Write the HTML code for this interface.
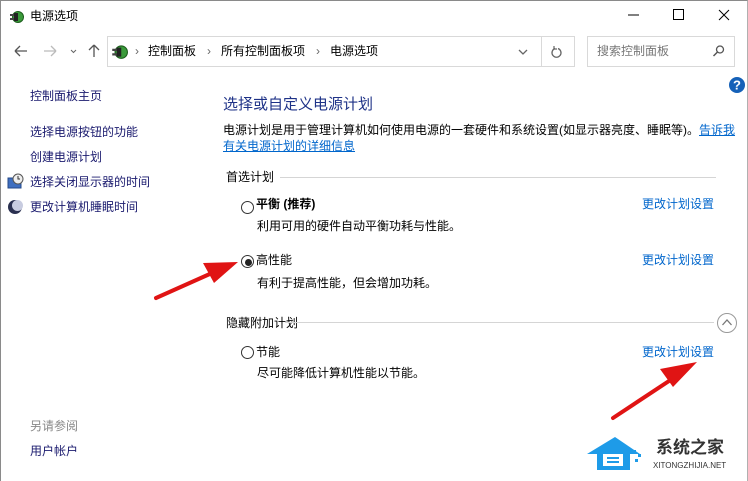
<!DOCTYPE html>
<html><head><meta charset="utf-8"><style>
*{margin:0;padding:0;box-sizing:border-box}
body{width:748px;height:481px;overflow:hidden;background:#fff;font-family:"Liberation Sans","Noto Sans CJK SC",sans-serif;font-size:12px;color:#000;position:relative}
.a{position:absolute;white-space:nowrap;line-height:14px}
.nav{color:#1a1a6e}
.lk{color:#0066cc}
.rad{position:absolute;width:13px;height:13px;border:1px solid #333;border-radius:50%;background:#fff}
.hr{position:absolute;height:1px;background:#d5d5d5}
</style></head><body>
<div style="position:absolute;left:0;top:0;width:748px;height:481px;border:1px solid #8a8a8a;border-bottom:none;border-right:1px solid #b0b0b0"></div>
<svg style="position:absolute;left:8px;top:8px" width="16" height="16" viewBox="0 0 16 16"><circle cx="10" cy="9" r="5.5" fill="#3a9a3a" stroke="#1d5e1d"/><rect x="2" y="6" width="6" height="2" fill="#444"/><rect x="2" y="10" width="6" height="2" fill="#444"/><rect x="6" y="5" width="4" height="8" fill="#222"/></svg>
<div class="a" style="left:30px;top:9px">电源选项</div>
<svg style="position:absolute;left:620px;top:5px" width="120" height="20"><line x1="8" y1="10" x2="19" y2="10" stroke="#000"/><rect x="673.5" y="4.5" width="10" height="10" fill="none" stroke="#000" transform="translate(-620,0)"/><path d="M99 5l10 10M109 5l-10 10" stroke="#000"/></svg>
<svg style="position:absolute;left:10px;top:41px" width="95" height="20"><path d="M5 10h12M5 10l5-5M5 10l5 5" stroke="#555" stroke-width="1.3" fill="none"/><path d="M34 10h12M46 10l-5-5M46 10l-5 5" stroke="#bbb" stroke-width="1.3" fill="none"/><path d="M61 9l2.5 2.5L66 9" stroke="#666" fill="none"/><path d="M84 4v12M84 4l-5 5M84 4l5 5" stroke="#555" stroke-width="1.3" fill="none"/></svg>
<div style="position:absolute;left:107px;top:36px;width:468px;height:31px;border:1px solid #d9d9d9"></div>
<div style="position:absolute;left:541px;top:37px;width:1px;height:29px;background:#d9d9d9"></div>
<svg style="position:absolute;left:110px;top:42px" width="18" height="18" viewBox="0 0 16 16"><circle cx="10" cy="9" r="5.5" fill="#3a9a3a" stroke="#1d5e1d"/><rect x="2" y="6" width="6" height="2" fill="#444"/><rect x="2" y="10" width="6" height="2" fill="#444"/><rect x="6" y="5" width="4" height="8" fill="#222"/></svg>
<div class="a" style="left:135px;top:44px;color:#666">›</div>
<div class="a" style="left:148px;top:44px">控制面板</div>
<div class="a" style="left:207px;top:44px;color:#666">›</div>
<div class="a" style="left:221px;top:44px">所有控制面板项</div>
<div class="a" style="left:316px;top:44px;color:#666">›</div>
<div class="a" style="left:330px;top:44px">电源选项</div>
<svg style="position:absolute;left:518px;top:44px" width="60" height="16"><path d="M1 6l4 4 4-4" stroke="#666" stroke-width="1.3" fill="none"/><path d="M37 4.5a4.5 4.5 0 1 0 3 0" stroke="#666" stroke-width="1.3" fill="none"/><path d="M36 2v3h3" stroke="#666" stroke-width="1.2" fill="none"/></svg>
<div style="position:absolute;left:587px;top:36px;width:148px;height:31px;border:1px solid #d9d9d9"></div>
<div class="a" style="left:597px;top:44px;color:#777">搜索控制面板</div>
<svg style="position:absolute;left:712px;top:44px" width="14" height="14"><circle cx="8" cy="5.5" r="3.5" stroke="#555" stroke-width="1.3" fill="none"/><path d="M5.5 8l-4 4" stroke="#555" stroke-width="1.5"/></svg>
<svg style="position:absolute;left:728px;top:76px" width="18" height="18"><circle cx="9" cy="9" r="8" fill="#1561b8"/><text x="9" y="13.5" font-size="13" font-weight="bold" fill="#fff" text-anchor="middle" font-family="Liberation Sans">?</text></svg>
<div class="a nav" style="left:30px;top:89px">控制面板主页</div>
<div class="a nav" style="left:30px;top:125px">选择电源按钮的功能</div>
<div class="a nav" style="left:30px;top:150px">创建电源计划</div>
<svg style="position:absolute;left:7px;top:173px" width="17" height="17"><rect x="1" y="5" width="13" height="10" fill="#3f6fc0" stroke="#244a8a"/><circle cx="11" cy="6" r="5" fill="#eee" stroke="#555"/><path d="M11 3v3h2" stroke="#333" fill="none"/></svg>
<div class="a nav" style="left:30px;top:175px">选择关闭显示器的时间</div>
<svg style="position:absolute;left:7px;top:199px" width="16" height="16"><circle cx="8" cy="8" r="7" fill="#2a3050"/><circle cx="10.5" cy="6.5" r="5.5" fill="#c8cce0"/></svg>
<div class="a nav" style="left:30px;top:200px">更改计算机睡眠时间</div>
<div class="a" style="left:30px;top:419px;color:#888">另请参阅</div>
<div class="a nav" style="left:30px;top:444px">用户帐户</div>
<div class="a" style="left:223px;top:96px;font-size:15px;line-height:18px;color:#1e3287">选择或自定义电源计划</div>
<div class="a" style="left:223px;top:123px">电源计划是用于管理计算机如何使用电源的一套硬件和系统设置(如显示器亮度、睡眠等)。<span class="lk" style="text-decoration:underline">告诉我</span></div>
<div class="a lk" style="left:223px;top:139px;text-decoration:underline">有关电源计划的详细信息</div>
<div class="a" style="left:226px;top:170px">首选计划</div>
<div class="hr" style="left:280px;top:177px;width:436px"></div>
<div class="rad" style="left:241px;top:201px"></div>
<div class="a" style="left:256px;top:197px;font-weight:bold">平衡 (推荐)</div>
<div class="a lk" style="left:642px;top:197px">更改计划设置</div>
<div class="a" style="left:257px;top:219px">利用可用的硬件自动平衡功耗与性能。</div>
<div class="rad" style="left:241px;top:255px"></div>
<div style="position:absolute;left:245px;top:259px;width:7px;height:7px;border-radius:50%;background:#222"></div>
<div class="a" style="left:256px;top:253px">高性能</div>
<div class="a lk" style="left:642px;top:253px">更改计划设置</div>
<div class="a" style="left:257px;top:276px">有利于提高性能，但会增加功耗。</div>
<div class="a" style="left:226px;top:316px">隐藏附加计划</div>
<div class="hr" style="left:285px;top:322px;width:429px"></div>
<svg style="position:absolute;left:716px;top:312px" width="22" height="22"><circle cx="11" cy="11" r="9.5" fill="#fff" stroke="#999"/><path d="M6.5 13l4.5-5 4.5 5" stroke="#777" stroke-width="1.3" fill="none"/></svg>
<div class="rad" style="left:241px;top:346px"></div>
<div class="a" style="left:256px;top:345px">节能</div>
<div class="a lk" style="left:642px;top:345px">更改计划设置</div>
<div class="a" style="left:257px;top:366px">尽可能降低计算机性能以节能。</div>
<svg style="position:absolute;left:0;top:0" width="748" height="481">
<path d="M156 298L212 273" stroke="#e01414" stroke-width="4" stroke-linecap="round"/>
<polygon points="238,262 203,263 214,283" fill="#e01414"/>
<path d="M613 418L672 379" stroke="#e01414" stroke-width="4" stroke-linecap="round"/>
<polygon points="697,362 660,369 673,387" fill="#e01414"/>
</svg>
<svg style="position:absolute;left:585px;top:432px" width="70" height="40"><path d="M2 22L30 5 55 22H45v16H12V22z" fill="#1e9be8"/><rect x="18" y="22" width="20" height="12" fill="#fff"/><rect x="22" y="25" width="12" height="2" fill="#1e9be8"/><rect x="22" y="29" width="12" height="2" fill="#1e9be8"/><rect x="48" y="18" width="3" height="3" fill="#1e9be8"/><rect x="53" y="22" width="3" height="3" fill="#1e9be8"/><rect x="50" y="27" width="3" height="3" fill="#1e9be8"/></svg>
<div class="a" style="left:656px;top:438px;font-size:17px;line-height:20px;font-weight:bold;color:#333">系统之家</div>
<div class="a" style="left:653px;top:461px;font-size:8px;line-height:9px;color:#333">XITONGZHIJIA.NET</div>
</body></html>
